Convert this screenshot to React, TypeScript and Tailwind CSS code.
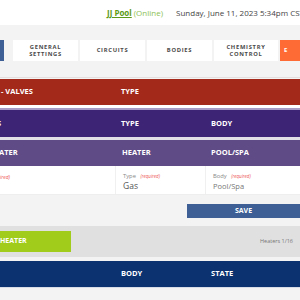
import React from "react";

const f = { fontFamily: '"Open Sans", "Liberation Sans", sans-serif' };

function Tab({ children, w = "w-[65px]" }: { children: React.ReactNode; w?: string }) {
  return (
    <div className={`${w} h-[21px] bg-white flex items-center justify-center text-center text-[5.8px] leading-[6.5px] font-bold tracking-[0.12em] text-[#4a4a4a]`}>
      {children}
    </div>
  );
}

export default function App() {
  return (
    <div className="w-[300px] h-[300px] overflow-hidden bg-[#f3f3f3]" style={f}>
      <div className="h-[25px] bg-white flex items-center pl-[107px] text-[8px] whitespace-nowrap">
        <span className="font-bold text-[#5c9a17] underline">JJ Pool</span>
        <span className="ml-[2px] text-[#8cc152]">(Online)</span>
        <span className="ml-[13px] text-[#444]">Sunday, June 11, 2023 5:34pm CST</span>
      </div>
      <div className="mt-[15px] flex h-[21px]">
        <div className="w-[9px] bg-[#3d5f96]" />
        <div className="ml-[9px] flex gap-[2px]">
          <Tab>GENERAL<br />SETTINGS</Tab>
          <Tab>CIRCUITS</Tab>
          <Tab>BODIES</Tab>
          <Tab w="w-[64px]">CHEMISTRY<br />CONTROL</Tab>
          <div className="w-[20px] bg-[#ff6b35] flex items-center pl-[4px] text-[6px] font-bold text-white">E</div>
        </div>
      </div>
      <div className="mt-[16px] h-px bg-[#e4dede]" />
      <div className="mt-[1px] h-[26px] bg-[#a3291a] grid grid-cols-[115px_90px_1fr] items-center text-[7.5px] font-bold text-white whitespace-nowrap">
        <div className="pl-[1px]">- VALVES</div>
        <div className="pl-[6px]">TYPE</div>
        <div />
      </div>
      <div className="h-[3px] bg-white" />
      <div className="h-[2px] bg-[#a79bc6]" />
      <div className="h-[27px] bg-[#3e2474] grid grid-cols-[115px_90px_1fr] items-center text-[7.5px] font-bold text-white whitespace-nowrap">
        <div className="-ml-[3px]">S</div>
        <div className="pl-[6px]">TYPE</div>
        <div className="pl-[6px]">BODY</div>
      </div>
      <div className="h-[3px] bg-[#e2e0e6]" />
      <div className="h-[26px] bg-[#5f4b86] grid grid-cols-[115px_90px_1fr] items-center text-[7.5px] font-bold text-white whitespace-nowrap">
        <div className="-ml-[1px]">ATER</div>
        <div className="pl-[7px]">HEATER</div>
        <div className="pl-[6px]">POOL/SPA</div>
      </div>
      <div className="h-[29px] bg-white border-b border-[#eee] grid grid-cols-[115px_90px_1fr] whitespace-nowrap">
        <div className="pt-[8px] text-[5px] italic text-[#e55]">ired)</div>
        <div className="border-l border-[#f0f0f0] pl-[7px] pt-[6px]">
          <div className="text-[5.8px] text-[#888]">Type <span className="ml-[3px] italic text-[#e55] text-[4.5px]">(required)</span></div>
          <div className="text-[8.5px] leading-[10px] text-[#555]">Gas</div>
        </div>
        <div className="border-l border-[#f0f0f0] pl-[7px] pt-[6px]">
          <div className="text-[5.8px] text-[#888]">Body <span className="ml-[3px] italic text-[#e55] text-[4.5px]">(required)</span></div>
          <div className="text-[7.5px] leading-[10px] text-[#777]">Pool/Spa</div>
        </div>
      </div>
      <div className="mt-[9px] flex justify-end">
        <div className="w-[113px] h-[14px] bg-[#3d5f96] flex items-center justify-center text-[7px] font-bold text-white">SAVE</div>
      </div>
      <div className="mt-[8px] h-[31px] bg-[#e0e0e0] flex items-center justify-between">
        <div className="w-[71px] h-[21px] bg-[#a2cc1b] flex items-center text-[7px] font-bold text-white">HEATER</div>
        <div className="pr-[7px] text-[5.5px] text-[#777]">Heaters 1/16</div>
      </div>
      <div className="h-[4px] bg-[#f3f3f3]" />
      <div className="h-[26px] bg-[#0c3370] grid grid-cols-[115px_90px_1fr] items-center text-[7.5px] font-bold text-white whitespace-nowrap">
        <div />
        <div className="pl-[6px]">BODY</div>
        <div className="pl-[6px]">STATE</div>
      </div>
      <div className="h-px bg-[#d8dce6]" />
    </div>
  );
}
